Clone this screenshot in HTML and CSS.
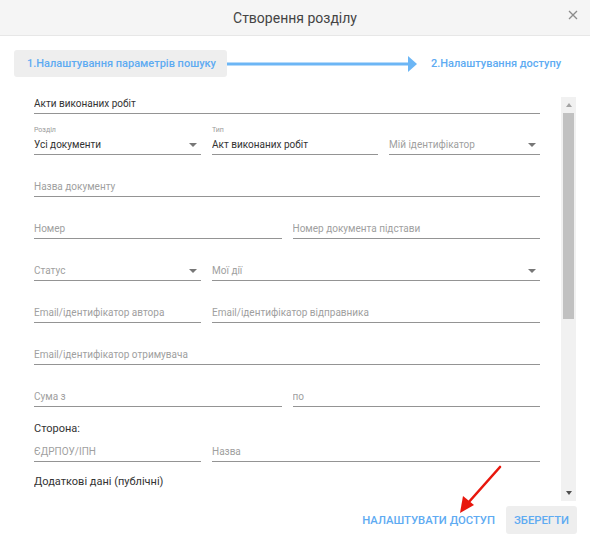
FILE: index.html
```html
<!DOCTYPE html>
<html lang="uk">
<head>
<meta charset="utf-8">
<title>Створення розділу</title>
<link rel="stylesheet" href="styles.css">
</head>
<body>
<div class="modal">
  <header class="head">
    <h1 class="title">Створення розділу</h1>
    <span class="close"><svg width="10" height="10" viewBox="0 0 10 10"><path d="M1 1L9 9M9 1L1 9" stroke="#8c8c8c" stroke-width="1.3" fill="none"/></svg></span>
  </header>

  <div class="steps">
    <div class="step step-active">1.Налаштування параметрів пошуку</div>
    <svg class="step-arrow" width="190" height="27" viewBox="0 0 190 27"><rect x="0" y="12.5" width="183" height="3" fill="#6cb6f5"/><polygon points="181,6 190,14 181,22" fill="#6cb6f5"/></svg>
    <div class="step">2.Налаштування доступу</div>
  </div>

  <div class="body">
    <div class="scroll">
      <form class="form">
        <div class="row row-first">
          <input class="inp value" type="text" value="Акти виконаних робіт">
        </div>
        <div class="row grid-3">
          <div class="fld">
            <label class="lbl">Розділ</label>
            <div class="sel value"><span>Усі документи</span><i class="caret"></i></div>
          </div>
          <div class="fld">
            <label class="lbl">Тип</label>
            <input class="inp value" type="text" value="Акт виконаних робіт">
          </div>
          <div class="fld">
            <label class="lbl"></label>
            <div class="sel"><span>Мій ідентифікатор</span><i class="caret"></i></div>
          </div>
        </div>
        <div class="row">
          <div class="fld"><label class="lbl"></label><input class="inp" type="text" placeholder="Назва документу"></div>
        </div>
        <div class="row grid-2">
          <div class="fld"><label class="lbl"></label><input class="inp" type="text" placeholder="Номер"></div>
          <div class="fld"><label class="lbl"></label><input class="inp" type="text" placeholder="Номер документа підстави"></div>
        </div>
        <div class="row grid-1w">
          <div class="fld"><label class="lbl"></label><div class="sel"><span>Статус</span><i class="caret"></i></div></div>
          <div class="fld"><label class="lbl"></label><div class="sel"><span>Мої дії</span><i class="caret"></i></div></div>
        </div>
        <div class="row grid-1w">
          <div class="fld"><label class="lbl"></label><input class="inp" type="text" placeholder="Email/ідентифікатор автора"></div>
          <div class="fld"><label class="lbl"></label><input class="inp" type="text" placeholder="Email/ідентифікатор відправника"></div>
        </div>
        <div class="row">
          <div class="fld"><label class="lbl"></label><input class="inp" type="text" placeholder="Email/ідентифікатор отримувача"></div>
        </div>
        <div class="row grid-2">
          <div class="fld"><label class="lbl"></label><input class="inp" type="text" placeholder="Сума з"></div>
          <div class="fld"><label class="lbl"></label><input class="inp" type="text" placeholder="по"></div>
        </div>
        <div class="section">Сторона:</div>
        <div class="row row-tight grid-1w">
          <input class="inp" type="text" placeholder="ЄДРПОУ/ІПН">
          <input class="inp" type="text" placeholder="Назва">
        </div>
        <div class="section section-2">Додаткові дані (публічні)</div>
        <div class="row">
          <div class="fld"><label class="lbl"></label><input class="inp" type="text" placeholder="Ключ"></div>
        </div>
      </form>
    </div>
    <div class="scrollbar">
      <div class="sb-btn"><i class="sb-up"></i></div>
      <div class="sb-thumb"></div>
      <div class="sb-track"></div>
      <div class="sb-btn"><i class="sb-down"></i></div>
    </div>
  </div>

  <div class="foot">
    <button class="btn btn-text" type="button">Налаштувати доступ</button>
    <button class="btn btn-save" type="button">Зберегти</button>
  </div>

  <svg class="annot" width="590" height="549" viewBox="0 0 590 549">
    <line x1="500" y1="467" x2="468" y2="503" stroke="#e8170d" stroke-width="2.6" stroke-linecap="round"/>
    <polygon points="460,513 463,496 474,505" fill="#e8170d"/>
  </svg>
</div>
</body>
</html>
```

FILE: styles.css
```css
* { box-sizing: border-box; }

html, body {
  margin: 0;
  padding: 0;
  background: #ffffff;
}

body {
  font-family: Roboto, "Liberation Sans", Arial, sans-serif;
  color: #333;
}

.modal {
  position: relative;
  width: 590px;
  height: 549px;
  background: #fff;
  overflow: hidden;
}

/* header */
.head {
  height: 36px;
  background: #f5f5f5;
  border-bottom: 1px solid #e7e7e7;
  display: flex;
  align-items: center;
  justify-content: center;
  position: relative;
}

.title {
  margin: 0;
  font-size: 14px;
  font-weight: 400;
  color: #444;
  line-height: 20px;
}

.close {
  position: absolute;
  right: 12px;
  top: 10px;
  width: 10px;
  height: 10px;
  display: block;
}
.close svg { display: block; }

/* steps */
.steps {
  display: flex;
  align-items: center;
  padding: 14px 14px 0 14px;
  height: 41px;
}

.step {
  font-size: 11px;
  font-weight: 500;
  color: #5eabf2;
  line-height: 27px;
  white-space: nowrap;
}

.step-active {
  width: 213px;
  height: 27px;
  background: #eeeeee;
  border-radius: 3px;
  padding-left: 13px;
}

.step-arrow {
  display: block;
  flex: none;
  margin-right: 14px;
}

/* body */
.body {
  display: flex;
  margin-top: 18px;
  height: 406px;
  padding-left: 34px;
  padding-right: 14px;
}

.scroll {
  width: 506px;
  height: 406px;
  overflow: hidden;
}

.form {
  display: flex;
  flex-direction: column;
}

.row + .row { margin-top: 12px; }
.row-first + .row { margin-top: 11px; }

.grid-3 {
  display: grid;
  grid-template-columns: 167px 166px 1fr;
  column-gap: 11px;
}
.grid-2 {
  display: grid;
  grid-template-columns: 1fr 1fr;
  column-gap: 11px;
}
.grid-1w {
  display: grid;
  grid-template-columns: 167px 1fr;
  column-gap: 11px;
}

.fld {
  display: flex;
  flex-direction: column;
  min-width: 0;
}

.lbl {
  display: block;
  height: 11px;
  font-size: 7px;
  line-height: 11px;
  color: #9a9a9a;
}

.inp, .sel {
  display: flex;
  align-items: center;
  width: 100%;
  height: 19px;
  margin: 0;
  padding: 0 0 1px 0;
  border: 0;
  border-bottom: 1px solid #949494;
  background: transparent;
  font-family: Roboto, "Liberation Sans", Arial, sans-serif;
  font-size: 10px;
  color: #a0a0a0;
  outline: none;
  border-radius: 0;
}

.inp::placeholder { color: #a0a0a0; opacity: 1; }
.inp.value, .sel.value { color: #333; }

.sel {
  justify-content: space-between;
}

.caret {
  display: block;
  width: 0;
  height: 0;
  border-left: 4px solid transparent;
  border-right: 4px solid transparent;
  border-top: 4px solid #777;
  margin-right: 4px;
}

.section {
  margin-top: 14px;
  font-size: 11px;
  line-height: 16px;
  color: #333;
}
.section + .row-tight { margin-top: 6px; }
.section-2 { margin-top: 12px; }
.section-2 + .row { margin-top: 4px; }

/* fake scrollbar */
.scrollbar {
  margin-left: 21px;
  margin-top: 2px;
  width: 15px;
  height: 404px;
  background: #f1f1f1;
  display: flex;
  flex-direction: column;
}

.sb-btn {
  height: 16px;
  display: flex;
  align-items: center;
  justify-content: center;
}

.sb-up {
  width: 0; height: 0;
  border-left: 3.5px solid transparent;
  border-right: 3.5px solid transparent;
  border-bottom: 4px solid #a3a3a3;
}
.sb-down {
  width: 0; height: 0;
  border-left: 3.5px solid transparent;
  border-right: 3.5px solid transparent;
  border-top: 4px solid #505050;
}

.sb-thumb {
  height: 206px;
  margin: 0 2px;
  background: #c1c1c1;
}
.sb-track { flex: 1; }

/* footer */
.foot {
  display: flex;
  justify-content: flex-end;
  align-items: center;
  gap: 11px;
  margin-top: 5px;
  padding-right: 13px;
}

.btn {
  height: 28px;
  border: 0;
  border-radius: 3px;
  background: transparent;
  font-family: Roboto, "Liberation Sans", Arial, sans-serif;
  font-size: 11.3px;
  font-weight: 500;
  text-transform: uppercase;
  color: #5eabf2;
  padding: 0 7px;
  cursor: pointer;
}
.btn-text { padding: 0; }
.btn-save {
  background: #eeeeee;
  width: 71px;
}

.annot {
  position: absolute;
  left: 0;
  top: 0;
  pointer-events: none;
}
```
